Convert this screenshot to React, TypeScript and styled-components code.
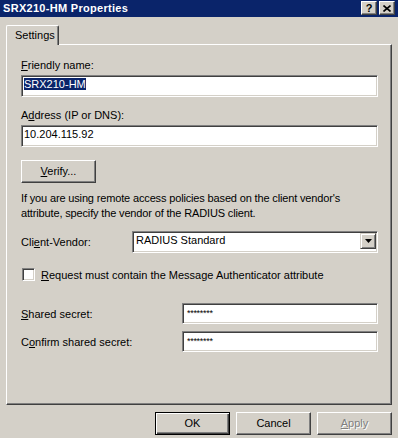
import { createGlobalStyle, styled } from "styled-components"

const GlobalStyle = createGlobalStyle`
  html, body {
    margin: 0;
    padding: 0;
    background: #d4d0c8;
  }
  body {
    font-family: "Liberation Sans", Arial, sans-serif;
    font-size: 11px;
    color: #000;
  }
`

const Window = styled.div`
  width: 398px;
  height: 438px;
  background: #d4d0c8;
  overflow: hidden;
  display: flex;
  flex-direction: column;
`

const TitleBar = styled.div`
  height: 17px;
  background: #0a246a;
  display: flex;
  align-items: flex-start;
  justify-content: space-between;
  padding: 0 3px 0 3px;
`

const Title = styled.div`
  color: #fff;
  font-weight: bold;
  font-size: 11px;
  letter-spacing: 0.3px;
  line-height: 17px;
`

const CaptionButtons = styled.div`
  display: flex;
  gap: 2px;
  margin-top: 1px;
`

const CaptionButton = styled.div`
  width: 14px;
  height: 12px;
  background: #d4d0c8;
  border: 1px solid;
  border-color: #fff #404040 #404040 #fff;
  box-shadow: inset -1px -1px #808080;
  display: flex;
  align-items: center;
  justify-content: center;
  font-weight: bold;
  font-size: 11px;
  line-height: 12px;
`

const Body = styled.div`
  padding: 8px 6px 0 6px;
  display: flex;
  flex-direction: column;
`

const TabStrip = styled.div`
  display: flex;
  height: 19px;
`

const Tab = styled.div`
  position: relative;
  z-index: 1;
  width: 53px;
  height: 20px;
  box-sizing: border-box;
  background: #d4d0c8;
  border-left: 1px solid #fff;
  border-top: 1px solid #fff;
  border-right: 1px solid #404040;
  border-top-left-radius: 2px;
  border-top-right-radius: 2px;
  box-shadow: inset -1px 0 #808080;
  padding: 3px 0 0 8px;
  line-height: 13px;
`

const Panel = styled.div`
  height: 361px;
  box-sizing: border-box;
  border: 1px solid;
  border-color: #fff #404040 #404040 #fff;
  box-shadow: inset -1px -1px #808080;
  padding: 14px 13px 0 14px;
  display: flex;
  flex-direction: column;
`

const FieldLabel = styled.div<{ $top?: number }>`
  line-height: 13px;
  margin-top: ${(p) => p.$top ?? 0}px;
  margin-bottom: 3px;
`

const TextBox = styled.div<{ $height?: number }>`
  height: ${(p) => p.$height ?? 22}px;
  box-sizing: border-box;
  background: #fff;
  border: 1px solid;
  border-color: #808080 #fff #fff #808080;
  box-shadow: inset 1px 1px #404040, inset -1px -1px #d4d0c8;
  padding: 2px 0 0 2px;
  line-height: 13px;
  white-space: nowrap;
  overflow: hidden;
`

const Selected = styled.span`
  background: #0a246a;
  color: #fff;
`

const PushButton = styled.div<{ $default?: boolean; $disabled?: boolean }>`
  width: 75px;
  height: 23px;
  box-sizing: border-box;
  background: #d4d0c8;
  display: flex;
  align-items: center;
  justify-content: center;
  line-height: 13px;
  border: 1px solid;
  border-color: ${(p) => (p.$default ? "#000" : "#fff #404040 #404040 #fff")};
  box-shadow: ${(p) =>
    p.$default
      ? "inset 1px 1px #fff, inset -1px -1px #404040, inset -2px -2px #808080"
      : "inset -1px -1px #808080"};
  color: ${(p) => (p.$disabled ? "#808080" : "#000")};
  text-shadow: ${(p) => (p.$disabled ? "1px 1px #fff" : "none")};
`

const VerifyButton = styled(PushButton)`
  margin-top: 13px;
`

const Paragraph = styled.p`
  margin: 8px 0 0 0;
  line-height: 15px;
  letter-spacing: -0.15px;
`

const Row = styled.div<{ $top: number; $labelWidth: number }>`
  display: grid;
  grid-template-columns: ${(p) => p.$labelWidth}px 1fr;
  align-items: center;
  margin-top: ${(p) => p.$top}px;
`

const SelectBox = styled(TextBox)`
  display: flex;
  align-items: flex-start;
  justify-content: space-between;
  padding: 2px 2px 0 3px;
`

const DropArrow = styled.div`
  width: 16px;
  height: 16px;
  box-sizing: border-box;
  margin-top: -1px;
  margin-right: -1px;
  background: #d4d0c8;
  border: 1px solid;
  border-color: #d4d0c8 #404040 #404040 #d4d0c8;
  box-shadow: inset 1px 1px #fff, inset -1px -1px #808080;
  display: flex;
  align-items: center;
  justify-content: center;
`

const CheckRow = styled.div`
  display: flex;
  align-items: center;
  gap: 6px;
  margin-top: 15px;
  padding-left: 1px;
`

const CheckBox = styled.div`
  width: 13px;
  height: 13px;
  box-sizing: border-box;
  background: #fff;
  border: 1px solid;
  border-color: #808080 #fff #fff #808080;
  box-shadow: inset 1px 1px #404040, inset -1px -1px #d4d0c8;
`

const Secret = styled.span`
  font-size: 9px;
  line-height: 10px;
  letter-spacing: -0.3px;
  padding-left: 2px;
`

const Footer = styled.div`
  display: flex;
  justify-content: flex-end;
  gap: 6px;
  margin-top: 7px;
`

export default function App() {
  return (
    <>
      <GlobalStyle />
      <Window>
        <TitleBar>
          <Title>SRX210-HM Properties</Title>
          <CaptionButtons>
            <CaptionButton>?</CaptionButton>
            <CaptionButton>
              <svg width="8" height="7" viewBox="0 0 8 7">
                <path d="M0.5 0.5 L7.5 6.5 M7.5 0.5 L0.5 6.5" stroke="#000" strokeWidth="1.6" />
              </svg>
            </CaptionButton>
          </CaptionButtons>
        </TitleBar>
        <Body>
          <TabStrip>
            <Tab>Settings</Tab>
          </TabStrip>
          <Panel>
            <FieldLabel>
              <u>F</u>riendly name:
            </FieldLabel>
            <TextBox>
              <Selected>SRX210-HM</Selected>
            </TextBox>
            <FieldLabel $top={12}>
              A<u>d</u>dress (IP or DNS):
            </FieldLabel>
            <TextBox>10.204.115.92</TextBox>
            <VerifyButton>
              <span>
                <u>V</u>erify...
              </span>
            </VerifyButton>
            <Paragraph>
              If you are using remote access policies based on the client vendor's
              <br />
              attribute, specify the vendor of the RADIUS client.
            </Paragraph>
            <Row $top={10} $labelWidth={111}>
              <span>
                Cli<u>e</u>nt-Vendor:
              </span>
              <SelectBox>
                <span>RADIUS Standard</span>
                <DropArrow>
                  <svg width="7" height="4" viewBox="0 0 7 4">
                    <path d="M0 0 H7 L3.5 4 Z" fill="#000" />
                  </svg>
                </DropArrow>
              </SelectBox>
            </Row>
            <CheckRow>
              <CheckBox />
              <span>
                <u>R</u>equest must contain the Message Authenticator attribute
              </span>
            </CheckRow>
            <Row $top={22} $labelWidth={161}>
              <span>
                <u>S</u>hared secret:
              </span>
              <TextBox $height={21}>
                <Secret>********</Secret>
              </TextBox>
            </Row>
            <Row $top={7} $labelWidth={161}>
              <span>
                C<u>o</u>nfirm shared secret:
              </span>
              <TextBox $height={21}>
                <Secret>********</Secret>
              </TextBox>
            </Row>
          </Panel>
          <Footer>
            <PushButton $default>OK</PushButton>
            <PushButton>Cancel</PushButton>
            <PushButton $disabled>
              <span>
                <u>A</u>pply
              </span>
            </PushButton>
          </Footer>
        </Body>
      </Window>
    </>
  )
}
